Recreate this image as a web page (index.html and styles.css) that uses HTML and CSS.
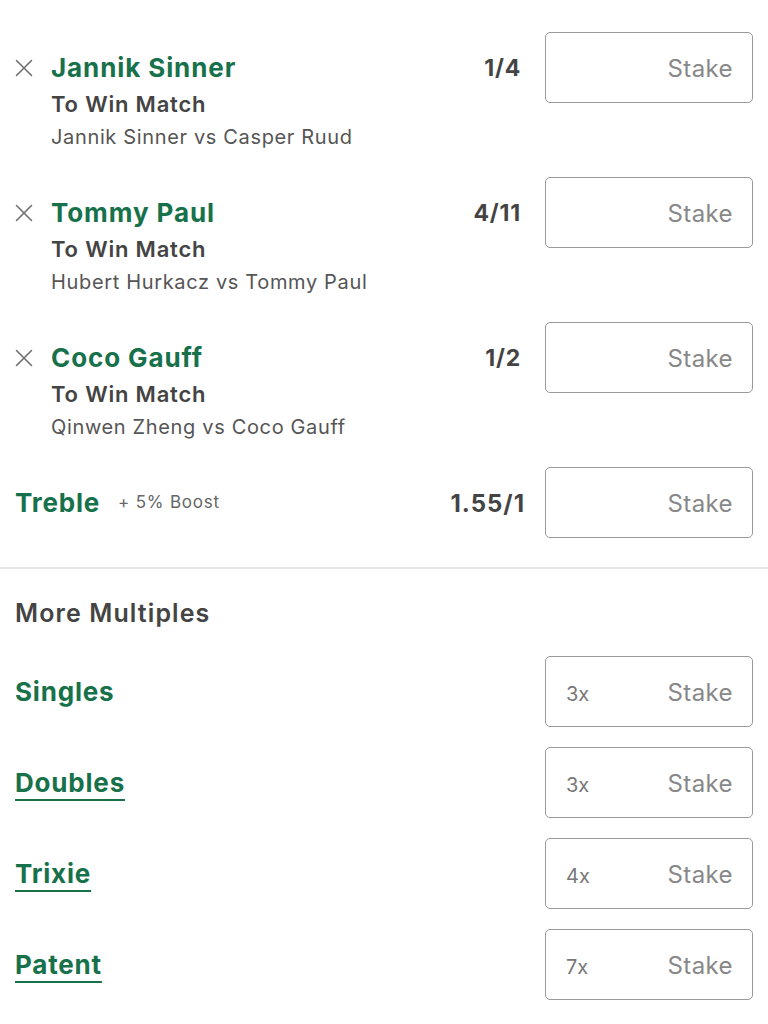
FILE: index.html
```html
<!DOCTYPE html>
<html lang="en">
<head>
<meta charset="utf-8">
<title>Bet slip</title>
<link rel="stylesheet" href="styles.css">
</head>
<body>
<main class="slip">
  <section class="selections">
    <div class="sel">
      <div class="sel-left">
        <span class="remove"><svg viewBox="0 0 18 18" width="18" height="18"><path d="M1.5 1.5 L16.5 16.5 M16.5 1.5 L1.5 16.5" stroke="#707070" stroke-width="1.6" fill="none" stroke-linecap="round"/></svg></span>
        <div class="info">
          <div class="name">Jannik Sinner</div>
          <div class="market">To Win Match</div>
          <div class="event">Jannik Sinner vs Casper Ruud</div>
        </div>
      </div>
      <div class="sel-right">
        <span class="odds">1/4</span>
        <div class="stake"><span class="ph">Stake</span></div>
      </div>
    </div>
    <div class="sel">
      <div class="sel-left">
        <span class="remove"><svg viewBox="0 0 18 18" width="18" height="18"><path d="M1.5 1.5 L16.5 16.5 M16.5 1.5 L1.5 16.5" stroke="#707070" stroke-width="1.6" fill="none" stroke-linecap="round"/></svg></span>
        <div class="info">
          <div class="name">Tommy Paul</div>
          <div class="market">To Win Match</div>
          <div class="event">Hubert Hurkacz vs Tommy Paul</div>
        </div>
      </div>
      <div class="sel-right">
        <span class="odds">4/11</span>
        <div class="stake"><span class="ph">Stake</span></div>
      </div>
    </div>
    <div class="sel">
      <div class="sel-left">
        <span class="remove"><svg viewBox="0 0 18 18" width="18" height="18"><path d="M1.5 1.5 L16.5 16.5 M16.5 1.5 L1.5 16.5" stroke="#707070" stroke-width="1.6" fill="none" stroke-linecap="round"/></svg></span>
        <div class="info">
          <div class="name">Coco Gauff</div>
          <div class="market">To Win Match</div>
          <div class="event">Qinwen Zheng vs Coco Gauff</div>
        </div>
      </div>
      <div class="sel-right">
        <span class="odds">1/2</span>
        <div class="stake"><span class="ph">Stake</span></div>
      </div>
    </div>
    <div class="treble">
      <div class="treble-left">
        <span class="bet-name">Treble</span>
        <span class="boost">+ 5% Boost</span>
      </div>
      <div class="sel-right treble-right">
        <span class="odds treble-odds">1.55/1</span>
        <div class="stake"><span class="ph">Stake</span></div>
      </div>
    </div>
  </section>
  <hr class="divider">
  <section class="multiples">
    <h2 class="heading">More Multiples</h2>
    <div class="multi">
      <span class="bet-name">Singles</span>
      <div class="stake"><span class="count">3x</span><span class="ph">Stake</span></div>
    </div>
    <div class="multi">
      <span class="bet-name link">Doubles</span>
      <div class="stake"><span class="count">3x</span><span class="ph">Stake</span></div>
    </div>
    <div class="multi">
      <span class="bet-name link">Trixie</span>
      <div class="stake"><span class="count">4x</span><span class="ph">Stake</span></div>
    </div>
    <div class="multi">
      <span class="bet-name link">Patent</span>
      <div class="stake"><span class="count">7x</span><span class="ph">Stake</span></div>
    </div>
  </section>
</main>
</body>
</html>
```

FILE: styles.css
```css
* { box-sizing: border-box; }
html, body { margin: 0; padding: 0; background: #fff; }
body {
  font-family: Inter, "Noto Sans", "Liberation Sans", sans-serif;
  color: #444;
  width: 768px;
  height: 1024px;
  overflow: hidden;
}
.slip { padding: 31px 15px 0 15px; }

.selections { display: flex; flex-direction: column; gap: 24px; }

.sel { display: flex; justify-content: space-between; align-items: flex-start; }
.sel-left { display: flex; align-items: flex-start; }
.remove { width: 18px; height: 18px; margin-top: 28px; margin-right: 18px; display: block; }
.remove svg { display: block; }
.info { padding-top: 19px; }
.name { font-size: 26px; font-weight: 700; color: #17714b; line-height: 36px; letter-spacing: 0.9px; }
.market { font-size: 22px; font-weight: 600; color: #444; line-height: 36px; letter-spacing: 0.8px; }
.event { font-size: 20px; font-weight: 400; color: #555; line-height: 30px; letter-spacing: 0.65px; }

.sel-right { display: flex; align-items: center; gap: 24px; }
.odds { font-size: 23px; font-weight: 700; color: #444; line-height: 71px; padding-top: 2px; letter-spacing: 0.8px; }
.treble-odds { font-size: 24px; letter-spacing: 1px; }
.stake {
  width: 208px; height: 71px;
  border: 1.5px solid #9a9a9a;
  border-radius: 5px;
  display: flex; align-items: center; justify-content: space-between;
  padding: 2px 19px 0 20px;
}
.ph { margin-left: auto; font-size: 24px; color: #888; font-weight: 400; letter-spacing: 0.4px; }
.count { font-size: 20px; color: #777; padding-top: 3px; }

.treble { display: flex; justify-content: space-between; align-items: center; }
.treble-left { display: flex; align-items: center; gap: 18px; }
.treble-right { gap: 20px; }
.bet-name { font-size: 26px; font-weight: 700; color: #17714b; line-height: 36px; letter-spacing: 0.8px; }
.boost { font-size: 17px; color: #666; letter-spacing: 0.8px; padding-bottom: 2px; }

.divider { border: 0; border-top: 2px solid #e6e6e6; margin: 28px -15px 0; }

.multiples { display: flex; flex-direction: column; gap: 20px; }
.heading { margin: 26px 0 5px; font-size: 25px; font-weight: 600; color: #444; line-height: 36px; letter-spacing: 1.1px; }
.multi { display: flex; justify-content: space-between; align-items: center; }
.link { text-decoration: underline; text-decoration-thickness: 2px; text-underline-offset: 7px; text-decoration-color: #17714b; }
```
